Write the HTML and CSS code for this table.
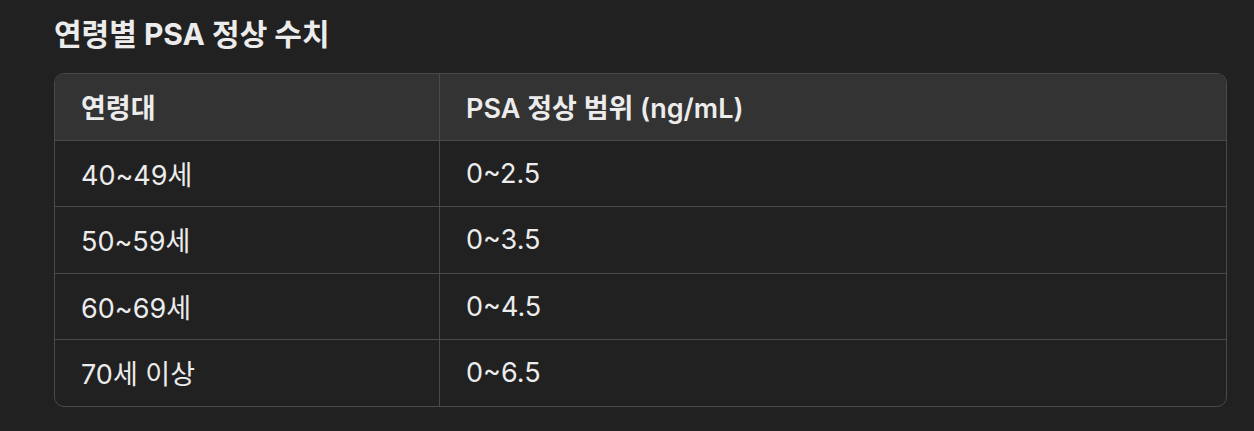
FILE: index.html
```html
<!DOCTYPE html>
<html lang="ko">
<head>
<meta charset="utf-8">
<link rel="stylesheet" href="styles.css">
</head>
<body>
<main class="page">
  <h2 class="title">연령별 PSA 정상 수치</h2>
  <div class="table-wrap">
    <table class="psa">
      <thead>
        <tr><th class="col-age">연령대</th><th>PSA 정상 범위 (ng/mL)</th></tr>
      </thead>
      <tbody>
        <tr><td>40~49세</td><td>0~2.5</td></tr>
        <tr><td>50~59세</td><td>0~3.5</td></tr>
        <tr><td>60~69세</td><td>0~4.5</td></tr>
        <tr><td>70세 이상</td><td>0~6.5</td></tr>
      </tbody>
    </table>
  </div>
</main>
</body>
</html>
```

FILE: styles.css
```css
html, body {
  margin: 0;
  padding: 0;
  background: #212121;
}
body {
  font-family: Inter, "Noto Sans CJK KR", sans-serif;
  color: #ececec;
}
.page {
  padding: 16px 27px 0 54px;
}
.title {
  margin: 0 0 21px 0;
  font-size: 30px;
  font-weight: 700;
  line-height: 36px;
  color: #ececec;
}
.table-wrap {
  border: 1.5px solid #4a4a4a;
  border-radius: 10px;
  overflow: hidden;
}
.psa {
  width: 100%;
  border-collapse: collapse;
  font-size: 27px;
}
.psa th, .psa td {
  text-align: left;
  padding: 0 26px;
  height: 65.5px;
  border-bottom: 1.5px solid #4a4a4a;
  border-right: 1.5px solid #4a4a4a;
}
.psa th:last-child, .psa td:last-child {
  border-right: none;
}
.psa tbody tr:last-child td {
  border-bottom: none;
}
.psa thead th {
  background: #333333;
  font-weight: 600;
}
.psa td {
  font-weight: 400;
}
.col-age {
  width: 332px;
}
```
